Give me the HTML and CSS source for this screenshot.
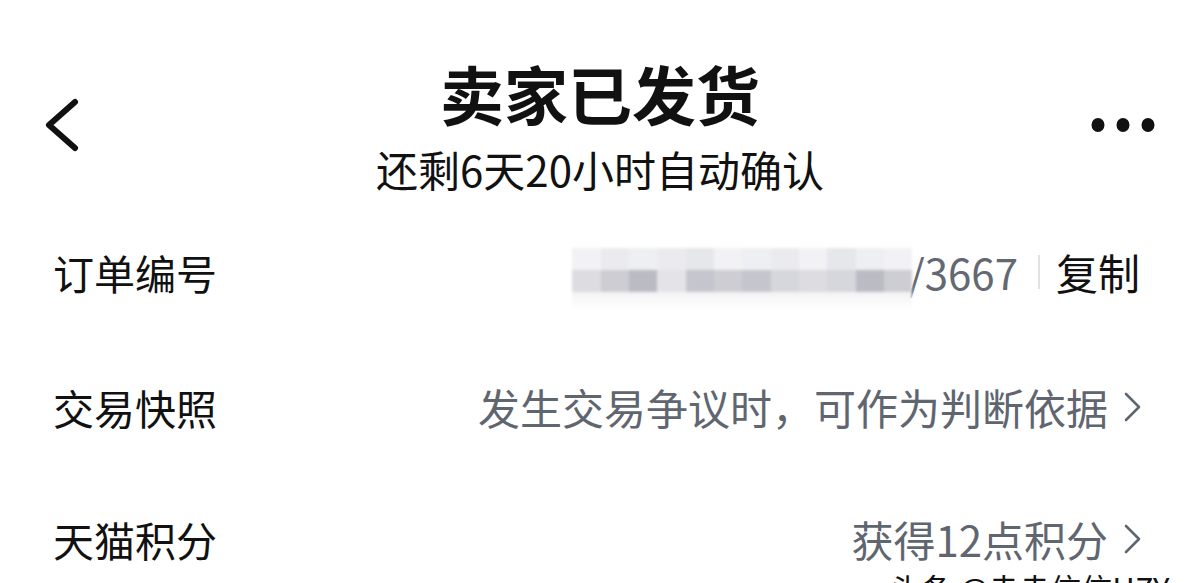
FILE: index.html
```html
<!DOCTYPE html>
<html lang="zh-CN">
<head>
<meta charset="utf-8">
<title>卖家已发货</title>
<link rel="stylesheet" href="styles.css">
</head>
<body>
<div class="page">
  <header class="header">
    <svg class="back" width="40" height="60" viewBox="0 0 40 60" aria-hidden="true">
      <path d="M31 7 L5 30 L31 53" fill="none" stroke="#111" stroke-width="6" stroke-linecap="round" stroke-linejoin="round"/>
    </svg>
    <div class="titles">
      <div class="title">卖家已发货</div>
      <div class="subtitle">还剩6天20小时自动确认</div>
    </div>
    <svg class="more" width="70" height="20" viewBox="0 0 70 20" aria-hidden="true">
      <ellipse cx="8" cy="10" rx="6.5" ry="7" fill="#111"/>
      <ellipse cx="33" cy="10" rx="6.5" ry="7" fill="#111"/>
      <ellipse cx="58" cy="10" rx="6.5" ry="7" fill="#111"/>
    </svg>
  </header>

  <section class="rows">
    <div class="row">
      <div class="label">订单编号</div>
      <div class="value">
        <div class="mosaic">
          <div class="mrow top">
            <span class="c1"></span><span class="c2"></span><span class="c3"></span><span class="c2"></span><span class="c4"></span><span class="c1"></span><span class="c3"></span><span class="c2"></span><span class="c1"></span><span class="c4"></span><span class="c3"></span><span class="c1"></span>
          </div>
          <div class="mrow bottom">
            <span class="d1"></span><span class="d2"></span><span class="d3"></span><span class="d5"></span><span class="d4"></span><span class="d2"></span><span class="d4"></span><span class="d6"></span><span class="d1"></span><span class="d6"></span><span class="d3"></span><span class="d2"></span>
          </div>
          <div class="mrow faint"></div>
        </div>
        <span class="order-no">/3667</span>
        <span class="divider"></span>
        <span class="copy">复制</span>
      </div>
    </div>
    <div class="row">
      <div class="label">交易快照</div>
      <div class="value gray">
        <span>发生交易争议时，可作为判断依据</span>
        <svg class="chev" width="20" height="34" viewBox="0 0 20 34" aria-hidden="true">
          <path d="M4 4 L17 17 L4 30" fill="none" stroke="#5f6670" stroke-width="2.6" stroke-linecap="round" stroke-linejoin="round"/>
        </svg>
      </div>
    </div>
    <div class="row">
      <div class="label">天猫积分</div>
      <div class="value gray">
        <span>获得12点积分</span>
        <svg class="chev" width="20" height="34" viewBox="0 0 20 34" aria-hidden="true">
          <path d="M4 4 L17 17 L4 30" fill="none" stroke="#5f6670" stroke-width="2.6" stroke-linecap="round" stroke-linejoin="round"/>
        </svg>
      </div>
    </div>
  </section>

  <div class="watermark">头条 @赤赤信信HZY</div>
</div>
</body>
</html>
```

FILE: styles.css
```css
* { box-sizing: border-box; }

html, body {
  margin: 0;
  padding: 0;
  background: #fff;
}

body {
  font-family: "Noto Sans CJK SC", "Noto Sans", sans-serif;
  color: #111;
  overflow: hidden;
}

.page {
  position: relative;
  width: 1200px;
  height: 583px;
  overflow: hidden;
}

.header {
  height: 209px;
  padding: 40px 40px 0 40px;
  display: grid;
  grid-template-columns: 1fr auto 1fr;
  align-items: center;
}

.back {
  justify-self: start;
  margin-left: 4px;
  display: block;
}

.more {
  justify-self: end;
  display: block;
}

.titles {
  display: flex;
  flex-direction: column;
  align-items: center;
}

.title {
  font-size: 64px;
  line-height: 72px;
  font-weight: 700;
  margin-bottom: 16px;
}

.subtitle {
  font-size: 42px;
  line-height: 50px;
  font-weight: 400;
}

.rows {
  padding: 0 60px 0 53px;
}

.row {
  height: 132px;
  display: flex;
  align-items: center;
  justify-content: space-between;
}

.row:first-child .label,
.row:first-child .value {
  margin-top: -6px;
}

.label {
  font-size: 41px;
  line-height: 50px;
  color: #111;
}

.value {
  display: flex;
  align-items: center;
  font-size: 42px;
  line-height: 50px;
}

.value.gray {
  color: #5f6670;
}

.chev {
  display: block;
  margin-left: 14px;
  margin-right: -2px;
}

.mosaic {
  width: 340px;
  height: 62px;
  display: flex;
  flex-direction: column;
  filter: blur(1.4px);
  margin-top: 14px;
}

.mrow {
  display: flex;
  height: 22px;
}

.mrow span {
  flex: 1;
}

.mrow.faint {
  height: 18px;
  background: linear-gradient(to bottom, #f3f3f5, #fff);
}

.c1 { background: #f2f2f4; }
.c2 { background: #ebebef; }
.c3 { background: #eeeff2; }
.c4 { background: #e5e7eb; }

.d1 { background: #dcdce1; }
.d2 { background: #cdcdd3; }
.d3 { background: #babbc3; }
.d4 { background: #c5c6cd; }
.d5 { background: #e4e4e8; }
.d6 { background: #d6d7dd; }

.order-no {
  color: #646870;
  margin-left: -4px;
}

.divider {
  width: 2px;
  height: 34px;
  background: #e2e2e2;
  margin: 0 16px 0 20px;
}

.copy {
  color: #111;
}

.watermark {
  position: absolute;
  left: 890px;
  top: 568px;
  font-size: 31px;
  line-height: 40px;
  color: #111;
  white-space: nowrap;
}
```
